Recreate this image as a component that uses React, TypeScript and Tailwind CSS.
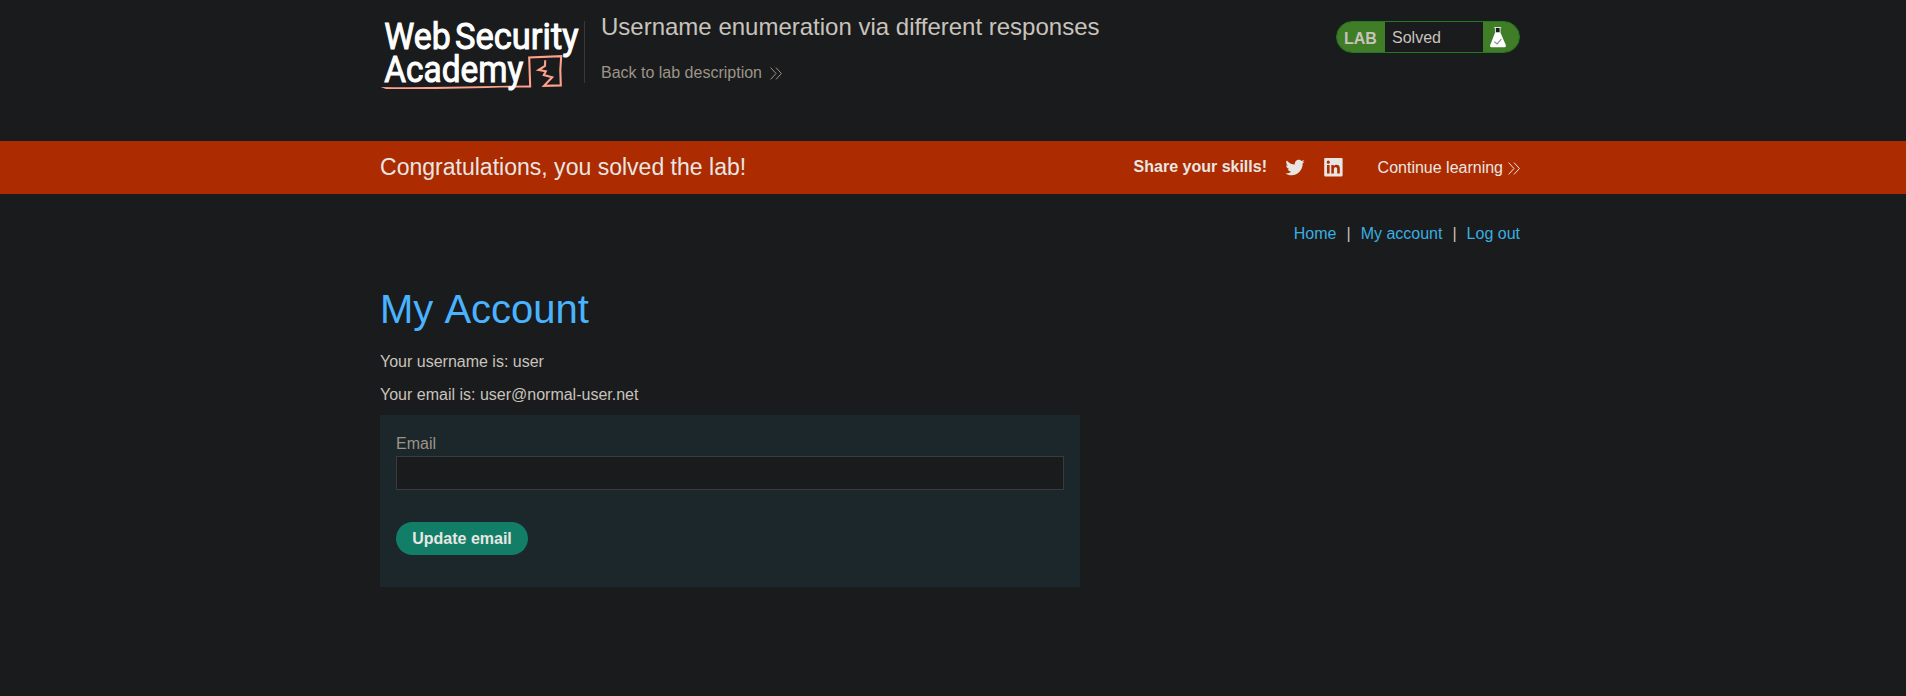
import React from "react";

function Chevrons({ className }: { className: string }) {
  return (
    <svg className={className} width="12" height="13" viewBox="0 0 12 13" fill="none" stroke="currentColor" strokeWidth="1">
      <path d="M0.6 0.6 L6 6.5 L0.6 12.4 M6 0.6 L11.4 6.5 L6 12.4" />
    </svg>
  );
}

function Logo() {
  return (
    <svg className="mt-[6px] h-[90px] w-[204px] shrink-0 overflow-visible" viewBox="380 6 204 90" aria-label="Web Security Academy">
      <path d="M380.6 87 Q410 87.6 450 86.8 L530.6 85.4 L530.6 87.4 L500 87.4 Q430 89.4 386 88.9 Z" fill="#ffa28b" />
      <path d="M530.2 87.2 L529.2 57.4 L561.2 56.2 Q559.6 70 560.8 85.4 L544 85.8 L552.2 77.2 L543.8 75 L545.8 71.2 L538.6 70 L545 66 L545.2 60.2" fill="none" stroke="#ffa28b" strokeWidth="2.1" />
      <g fill="#ffffff" stroke="#ffffff" strokeWidth="1" fontFamily="Roboto, sans-serif" fontWeight="400" fontSize="36.5">
        <text x="384.3" y="49.2" textLength="66.5" lengthAdjust="spacingAndGlyphs">Web</text>
        <text x="455" y="49.2" textLength="123.5" lengthAdjust="spacingAndGlyphs">Security</text>
        <text x="384.3" y="81.8" textLength="139" lengthAdjust="spacingAndGlyphs">Academy</text>
      </g>
    </svg>
  );
}

function Flask() {
  return (
    <svg width="18" height="21" viewBox="0 0 18 21" className="ml-1.5">
      <path d="M7 1 V6 H11 V1 Z" fill="#181a1b" />
      <path d="M5.2 0.5 H12.2 M6.4 0.5 V5.5 M11.1 0.5 V5.5" stroke="#d7e6d0" strokeWidth="1" fill="none" />
      <path d="M6.2 5.2 H11.3 L16.8 18 Q17.4 20.2 15.6 20.2 H2.2 Q0.5 20.2 1.2 18 Z" fill="#ffffff" />
      <path d="M5.4 14.6 L8 17 L12.4 12.2" fill="none" stroke="#8b8f92" strokeWidth="1.2" />
    </svg>
  );
}

function LabStatus() {
  return (
    <div className="mt-[21px] flex h-8 w-[184px] overflow-hidden rounded-full border border-[#227a24] text-base leading-4">
      <div className="w-12 bg-[#3f7d27] pt-[9px] pl-[7px] font-bold text-[#c8c3bc]">LAB</div>
      <div className="w-[98px] pt-2 pl-[7px]">Solved</div>
      <div className="flex-1 bg-[#3f7d27] pt-[5px]">
        <Flask />
      </div>
    </div>
  );
}

export default function App() {
  return (
    <div className="min-h-screen bg-[#1a1b1c] font-['Liberation_Sans',Arial,sans-serif] text-base text-[#c8c3bc]">
      <div className="pr-[6px]">
        <header className="mx-auto flex h-[141px] w-[1140px] items-start">
          <Logo />
          <div className="mt-[21px] h-[62px] w-px shrink-0 bg-[#37393b]" />
          <div className="grow pl-4">
            <h2 className="pt-[13px] text-2xl leading-7">Username enumeration via different responses</h2>
            <a className="mt-[23px] flex items-center leading-[18px] text-[#9d9488]" href="#">
              Back to lab description
              <Chevrons className="ml-[8.5px]" />
            </a>
          </div>
          <LabStatus />
        </header>
      </div>

      <section className="h-[53px] bg-[#ac2b00] pr-[6px] text-[#e8e6e3]">
        <div className="mx-auto flex h-full w-[1140px] items-start">
          <h4 className="grow pt-3 text-[23.04px] leading-7">Congratulations, you solved the lab!</h4>
          <span className="pt-[17px] font-bold leading-[18px]">Share your skills!</span>
          <svg className="mt-[15px] ml-[17px]" width="22" height="22" viewBox="0 0 24 24" fill="currentColor" aria-label="Twitter">
            <path d="M22.46 6c-.77.35-1.6.58-2.46.69.88-.53 1.56-1.37 1.88-2.38-.83.5-1.75.85-2.72 1.05C18.37 4.5 17.26 4 16 4c-2.35 0-4.27 1.92-4.27 4.29 0 .34.04.67.11.98C8.28 9.09 5.11 7.38 3 4.79c-.37.63-.58 1.37-.58 2.15 0 1.49.75 2.81 1.91 3.56-.71 0-1.37-.2-1.95-.5v.03c0 2.08 1.48 3.82 3.44 4.21a4.22 4.22 0 0 1-1.93.07 4.28 4.28 0 0 0 4 2.98 8.521 8.521 0 0 1-5.33 1.84c-.34 0-.68-.02-1.02-.06C3.44 20.29 5.7 21 8.12 21 16 21 20.33 14.46 20.33 8.79c0-.19 0-.37-.01-.56.84-.6 1.56-1.36 2.14-2.23z" />
          </svg>
          <svg className="mt-[16px] ml-[18px]" width="19" height="20" viewBox="0 0 19 20" fill="currentColor" aria-label="LinkedIn">
            <path fillRule="evenodd" d="M1 1 H17.7 Q18.6 1 18.6 1.9 V18.3 Q18.6 19.4 17.7 19.4 H1 Q0.2 19.4 0.2 18.3 V1.9 Q0.2 1 1 1 Z M3 7.9 V16.5 H5.6 V7.9 Z M4.3 3.6 A1.55 1.55 0 1 0 4.3 6.7 A1.55 1.55 0 1 0 4.3 3.6 Z M7.3 7.9 V16.5 H9.9 V12.2 C9.9 9.6 13.2 9.6 13.2 12.2 V16.5 H15.8 V11.2 C15.8 7.4 11.6 7 9.8 9.2 V7.9 Z" />
          </svg>
          <a className="ml-[34.6px] flex items-center pt-[18px] leading-[18px]" href="#">
            Continue learning
            <Chevrons className="ml-[5px]" />
          </a>
        </div>
      </section>

      <div className="pr-[6px]">
        <main className="mx-auto w-[1140px]">
          <nav className="flex justify-end pt-[31px] leading-[18px] text-[#3aaee0]">
            <a href="#">Home</a>
            <span className="mx-[10px] text-[#c8c3bc]">|</span>
            <a href="#">My account</a>
            <span className="mx-[10px] text-[#c8c3bc]">|</span>
            <a href="#">Log out</a>
          </nav>
          <h1 className="mt-[43px] text-[40px] leading-[46px] text-[#49b3ff] [font-kerning:none]">My Account</h1>
          <p className="mt-[21px] leading-[18px]">Your username is: user</p>
          <p className="mt-[15px] leading-[18px]">Your email is: user@normal-user.net</p>
          <form className="mt-[11px] h-[172px] w-[700px] bg-[#1c272b] px-4 pt-5">
            <label className="block leading-[18px] text-[#9d9488]">Email</label>
            <input className="mt-[3px] block h-[34px] w-full border border-[#373c3e] bg-[#1a1b1c] outline-none" />
            <button type="button" className="mt-8 h-[33px] w-[132px] rounded-full bg-[#137e67] font-bold text-[#e8e6e3]">
              Update email
            </button>
          </form>
        </main>
      </div>
    </div>
  );
}
